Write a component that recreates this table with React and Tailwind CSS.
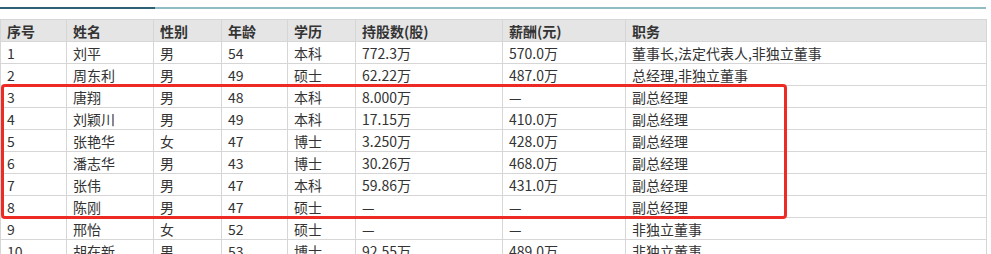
const rows = [
  ['1', '刘平', '男', '54', '本科', '772.3万', '570.0万', '董事长,法定代表人,非独立董事'],
  ['2', '周东利', '男', '49', '硕士', '62.22万', '487.0万', '总经理,非独立董事'],
  ['3', '唐翔', '男', '48', '本科', '8.000万', '—', '副总经理'],
  ['4', '刘颖川', '男', '49', '本科', '17.15万', '410.0万', '副总经理'],
  ['5', '张艳华', '女', '47', '博士', '3.250万', '428.0万', '副总经理'],
  ['6', '潘志华', '男', '43', '博士', '30.26万', '468.0万', '副总经理'],
  ['7', '张伟', '男', '47', '本科', '59.86万', '431.0万', '副总经理'],
  ['8', '陈刚', '男', '47', '硕士', '—', '—', '副总经理'],
  ['9', '邢怡', '女', '52', '硕士', '—', '—', '非独立董事'],
  ['10', '胡在新', '男', '53', '博士', '92.55万', '489.0万', '非独立董事'],
];

const headers = ['序号', '姓名', '性别', '年龄', '学历', '持股数(股)', '薪酬(元)', '职务'];
const widths = ['w-[66px]', 'w-[87px]', 'w-[68px]', 'w-[66px]', 'w-[68px]', 'w-[147px]', 'w-[123px]', 'w-[361px]'];

export default function App() {
  return (
    <div className="relative w-[991px] h-[254px] overflow-hidden bg-white text-[#333] font-['Noto_Sans_CJK_SC',sans-serif] text-[14px]">
      {/* title underline */}
      <div className="flex w-[986px] pt-[7px]">
        <div className="w-[155px] h-[2px] bg-[#2d6176]" />
        <div className="flex-1 h-[2px] bg-[#92bcc3]" />
      </div>

      <table className="mt-[10px] w-[986px] table-fixed border-collapse">
        <colgroup>
          {widths.map((w, i) => (
            <col key={i} className={w} />
          ))}
        </colgroup>
        <thead>
          <tr className="h-[22px] bg-[#e5e5e5]">
            {headers.map((h) => (
              <th key={h} className="border border-[#d6d6d6] px-[6px] py-0 text-left font-bold leading-[20px] whitespace-nowrap">
                {h}
              </th>
            ))}
          </tr>
        </thead>
        <tbody>
          {rows.map((r) => (
            <tr key={r[0]} className="h-[22px]">
              {r.map((c, i) => (
                <td key={i} className="border border-[#d6d6d6] px-[6px] py-0 leading-[20px] whitespace-nowrap">
                  {c}
                </td>
              ))}
            </tr>
          ))}
        </tbody>
      </table>

      {/* highlight box */}
      <div className="absolute left-[1px] top-[84px] w-[786px] h-[135px] border-[3px] border-[#ee2a24] rounded-[4px]" />
    </div>
  );
}
